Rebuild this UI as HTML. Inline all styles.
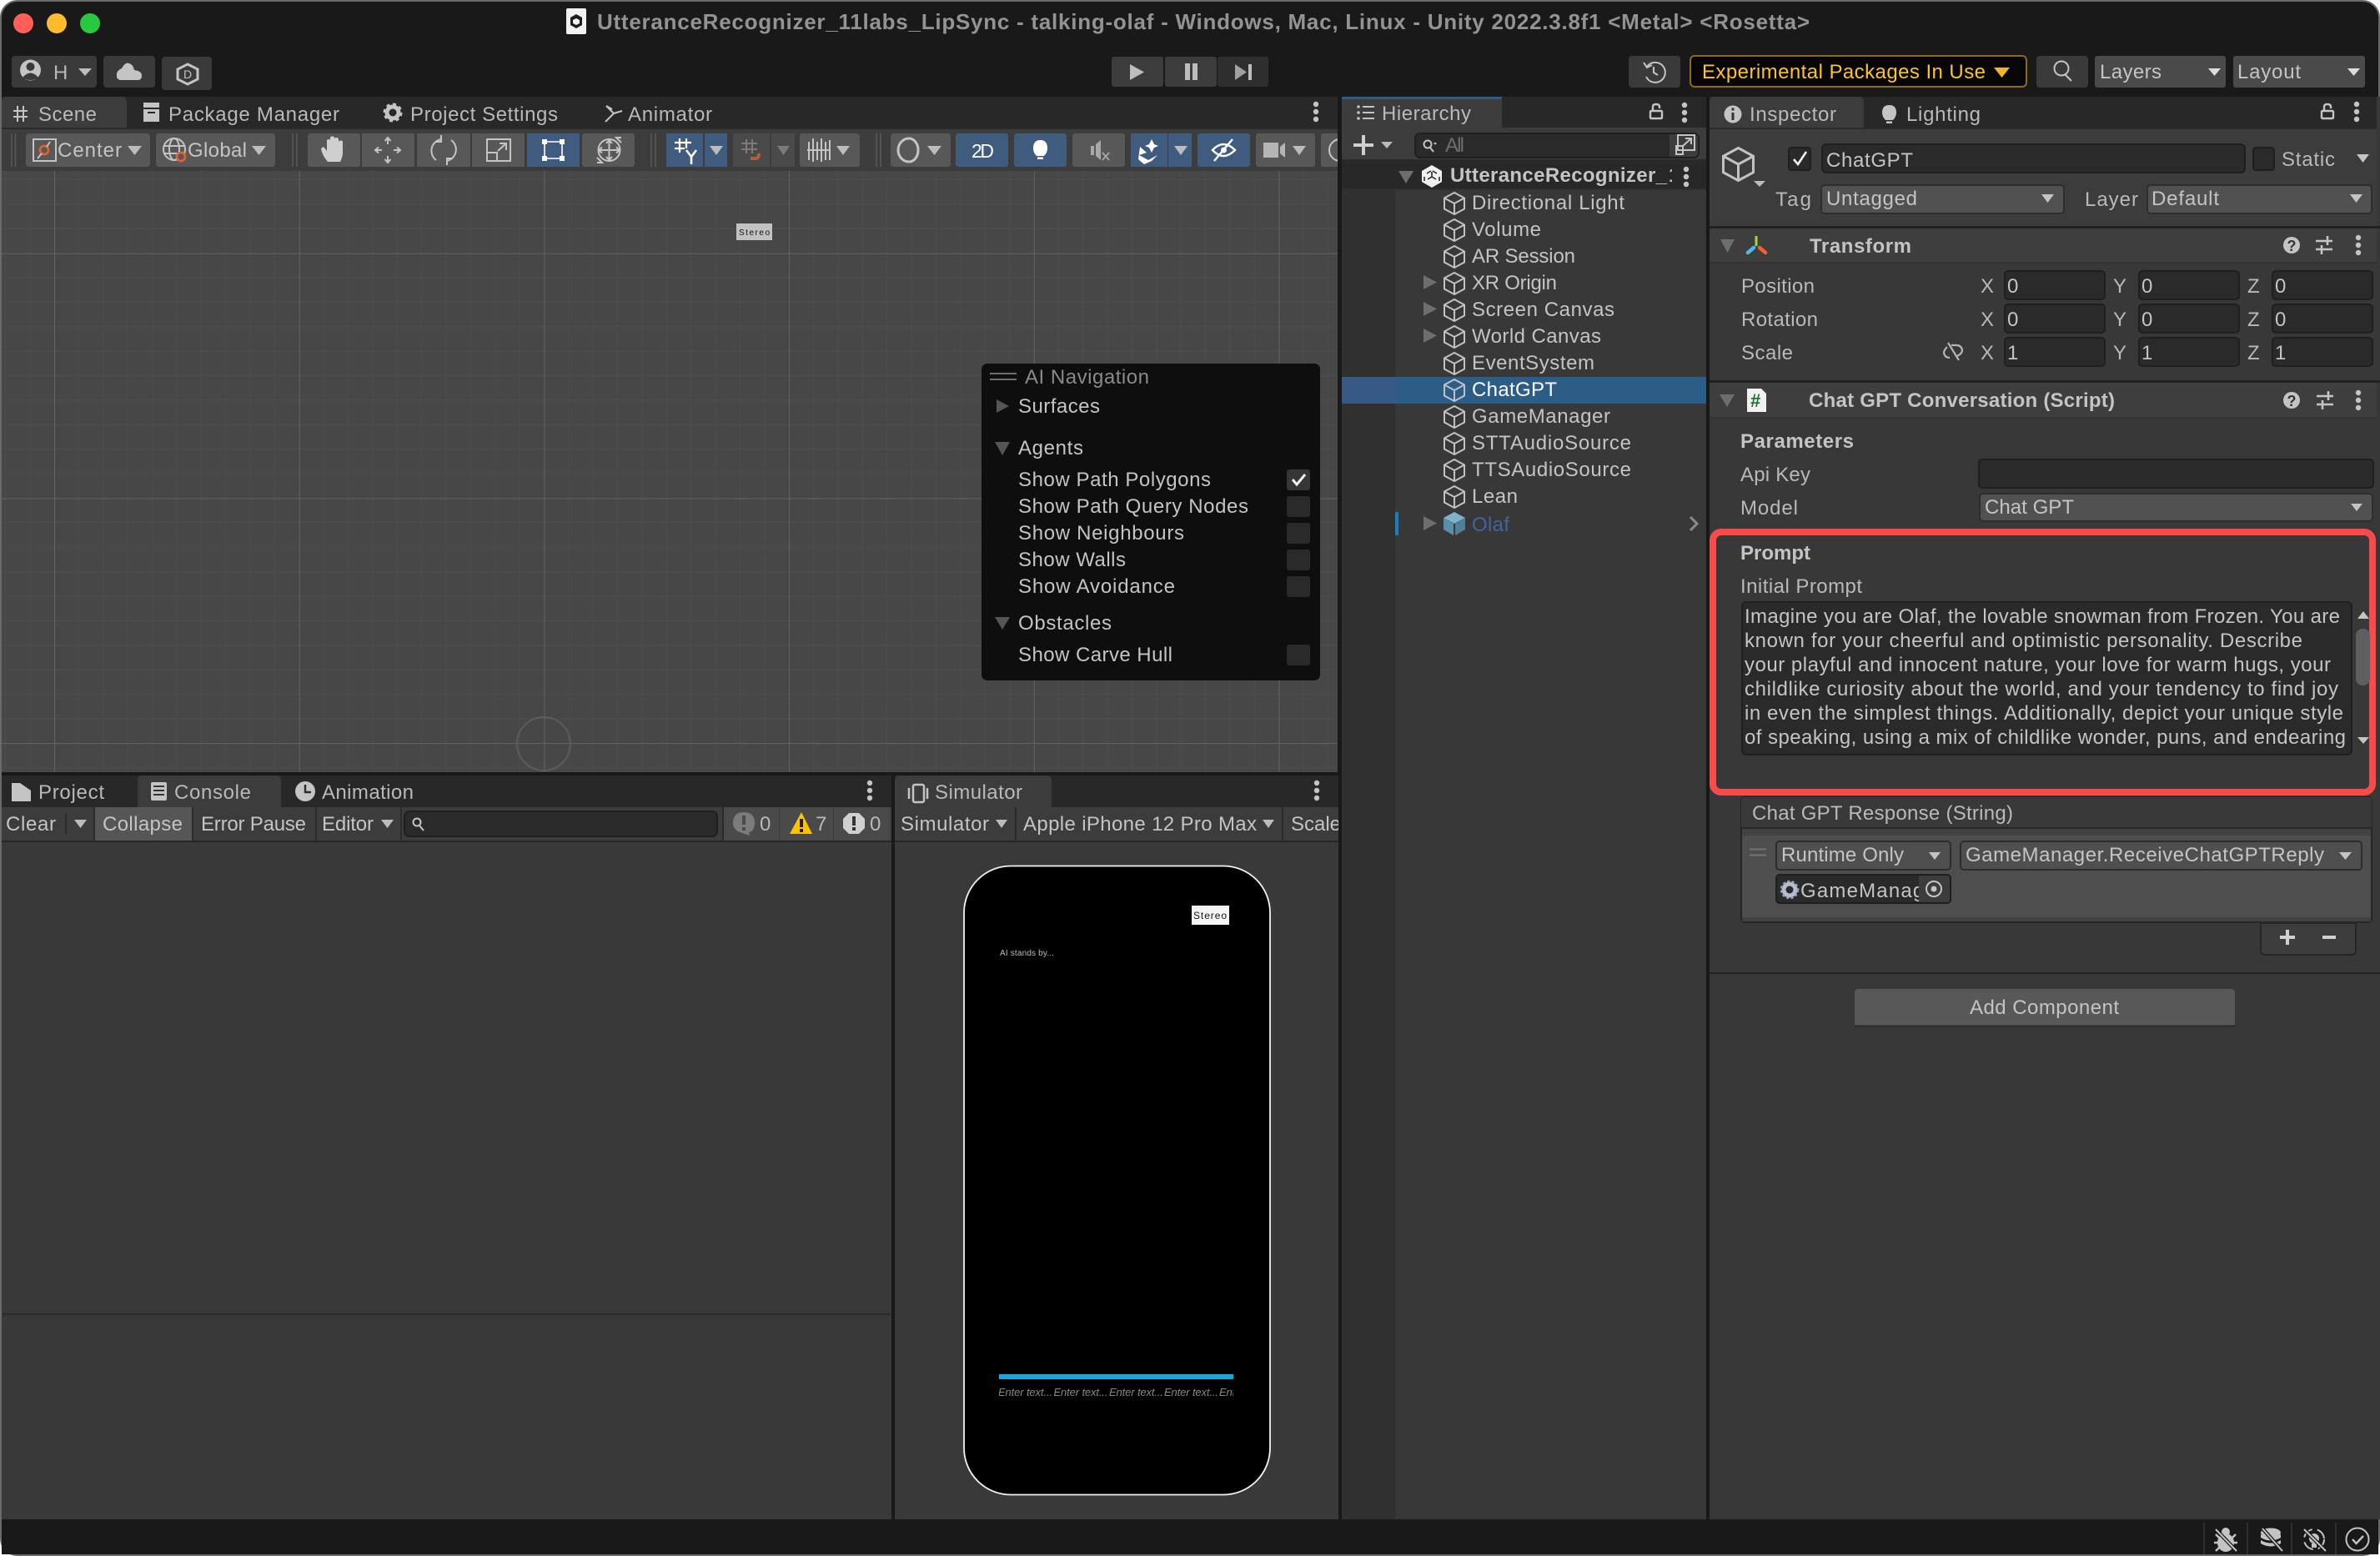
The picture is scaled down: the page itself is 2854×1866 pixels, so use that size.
<!DOCTYPE html>
<html><head><meta charset="utf-8"><title>Unity Editor</title>
<style>
html,body{margin:0;padding:0;background:#fff;width:2854px;height:1866px;overflow:hidden}
svg{display:block}
text{font-family:"Liberation Sans",sans-serif;font-size:24px;fill:#c4c4c4;white-space:pre;transform:translate(-1px,0)}
.b{font-weight:bold}
.t{font-weight:bold;fill:#939393;font-size:26px}
.d{fill:#8a8a8a}
.s{fill:#b9b9b9}
.i{stroke:#c4c4c4;stroke-width:2;fill:none}
.f{fill:#c4c4c4}
.a{fill:#bcbcbc}
.fd{fill:#2a2a2a;stroke:#1f1f1f;stroke-width:2}
.dd{fill:#515151;stroke:#2d2d2d;stroke-width:2}
.btn{fill:#585858}
.bl{fill:#3f5c7e}
.mid{fill:#3c3c3c}
.r text,text.r{transform:translate(-1px,-1px)}
</style></head><body>
<svg xmlns="http://www.w3.org/2000/svg" width="2854" height="1866" viewBox="0 0 2854 1866">
<defs>
<pattern id="grid" patternUnits="userSpaceOnUse" x="65" y="10" width="293.7" height="293.7">
<path d="M29.37 0V293.7M58.74 0V293.7M88.11 0V293.7M117.48 0V293.7M146.85 0V293.7M176.22 0V293.7M205.59 0V293.7M234.96 0V293.7M264.33 0V293.7M0 29.37H293.7M0 58.74H293.7M0 88.11H293.7M0 117.48H293.7M0 146.85H293.7M0 176.22H293.7M0 205.59H293.7M0 234.96H293.7M0 264.33H293.7" stroke="#4d4d4d" stroke-width="1" fill="none"/>
<path d="M.5 0V293.7M0 .5H293.7" stroke="#636363" stroke-width="1" fill="none"/>
</pattern>
<g id="cube" fill="none" stroke="#c2c2c2" stroke-width="2"><path d="M13 1 25 7.5V20.5L13 27 1 20.5V7.5Z"/><path d="M1 7.5 13 14 25 7.5M13 14V27"/></g>
<g id="dots" fill="#c4c4c4"><circle cx="0" cy="-9" r="3.2"/><circle cx="0" cy="0" r="3.2"/><circle cx="0" cy="9" r="3.2"/></g>
<g id="arrowR" fill="#6e6e6e"><path d="M0 0V17L16 8.5Z"/></g>
<g id="lock" fill="none" stroke="#c4c4c4" stroke-width="2.4"><rect x="1" y="9" width="14" height="9" rx="1"/><path d="M4 9V4Q4 1 8 1T12 4V6"/></g>
<g id="help"><circle cx="0" cy="0" r="10" fill="#c4c4c4"/><text x="-4.5" y="7" class="b" style="font-size:18px;fill:#333">?</text></g>
<g id="sl" fill="none" stroke="#c4c4c4" stroke-width="2.6"><path d="M-10-5H10M-10 5H10M4-11V0M-3 0V11"/></g>
<clipPath id="cTA"><rect x="2090" y="723" width="728" height="180"/></clipPath>
<clipPath id="cSc"><rect x="1073" y="970" width="532" height="40"/></clipPath>
<clipPath id="cU"><rect x="1995" y="195" width="10" height="30"/></clipPath>
<clipPath id="cG"><rect x="2156" y="1050" width="145" height="32"/></clipPath>
<clipPath id="cE"><rect x="1198" y="1655" width="281" height="30"/></clipPath>
<clipPath id="cTb"><rect x="1575" y="155" width="29" height="50"/></clipPath>
</defs>

<!-- window -->
<rect x="1" y="1" width="2852" height="1864" rx="20" fill="#191919" stroke="#6a6a6a" stroke-width="2"/>
<circle cx="28" cy="28" r="12" fill="#ff5f57"/><circle cx="68" cy="28" r="12" fill="#febc2e"/><circle cx="108" cy="28" r="12" fill="#28c840"/>
<rect x="679" y="10" width="24" height="31" rx="2" fill="#f2f2f2"/><path d="M691 17 698 21V30L691 34 684 30V21Z" fill="#1c1c1c"/><path d="M691 22 695 24V28L691 30 687 28V24Z" fill="#f2f2f2"/>
<text class="t" x="717" y="35" textLength="1454">UtteranceRecognizer_11labs_LipSync - talking-olaf - Windows, Mac, Linux - Unity 2022.3.8f1 &lt;Metal&gt; &lt;Rosetta&gt;</text>

<!-- top toolbar -->
<rect x="14" y="67" width="102" height="38" rx="4" fill="#3a3a3a"/>
<circle cx="36.5" cy="84" r="12.5" fill="#c4c4c4"/><circle cx="36.5" cy="80" r="5" fill="#3a3a3a"/><path d="M27 93Q36.5 82 46 93Q36.5 99 27 93Z" fill="#3a3a3a"/>
<text x="65" y="95" textLength="16" class="s">H</text><path d="M94 82H110L102 91Z" class="a"/>
<rect x="124" y="67" width="62" height="38" rx="4" fill="#3a3a3a"/><path d="M145 96Q139 96 140 88Q141 84 146 82Q150 74 155 76Q160 78 161 84Q170 85 170 91Q170 96 165 96Z" fill="#c4c4c4"/>
<rect x="194" y="68" width="60" height="40" rx="4" fill="#3a3a3a"/>
<path d="M225 77 237 83V95L225 101 213 95V83Z" fill="none" stroke="#c4c4c4" stroke-width="3"/><text x="221" y="94" style="font-size:14px">D</text>

<rect x="1333" y="68" width="62" height="36" rx="3" fill="#3c3c3c"/><rect x="1397" y="68" width="62" height="36" rx="3" fill="#3c3c3c"/><rect x="1460" y="68" width="61" height="36" rx="3" fill="#2e2e2e"/>
<path d="M1355 77V96L1372 86.5Z" fill="#bdbdbd"/><path d="M1421 76h6v20h-6zM1430 76h6v20h-6z" fill="#bdbdbd"/><path d="M1481 77V96L1495 86.5Z" fill="#a0a0a0"/><rect x="1497" y="77" width="4" height="19" fill="#bdbdbd"/>

<rect x="1953" y="67" width="62" height="38" rx="4" fill="#3a3a3a"/>
<path d="M1975 80A12 12 0 1 1 1974 92" class="i"/><path d="M1971 75 1975 81 1981 78M1983 80V87L1988 90" class="i"/>
<rect x="2027" y="67" width="403" height="37" rx="5" fill="#060606" stroke="#8f6b12" stroke-width="2"/>
<text x="2042" y="94" textLength="340" style="fill:#fdc22e">Experimental Packages In Use</text><path d="M2391 81H2410L2400.5 93Z" fill="#f2b52a"/>
<rect x="2442" y="67" width="62" height="38" rx="4" fill="#3a3a3a"/><circle cx="2472" cy="82" r="8.5" class="i"/><path d="M2477 90 2484 97" class="i" stroke-width="3"/>
<rect x="2512" y="67" width="157" height="38" rx="3" fill="#4a4a4a"/><text x="2519" y="94" textLength="74">Layers</text><path d="M2648 82H2663L2655.5 91Z" fill="#ddd"/>
<rect x="2678" y="67" width="158" height="38" rx="3" fill="#4a4a4a"/><text x="2684" y="94" textLength="76">Layout</text><path d="M2815 82H2830L2822.5 91Z" fill="#ddd"/>

<!-- Scene panel -->
<rect x="2" y="116" width="1602" height="37" fill="#282828"/>
<path d="M2 153V122Q2 116 8 116H146Q152 116 152 122V153Z" fill="#3c3c3c"/>
<path d="M21 127V146M28 127V146M16 133H33M16 140H33" class="i"/>
<text x="47" y="145" textLength="70" class="s">Scene</text>
<path d="M172 123h19v6h-19zM172 131h19v15h-19z" fill="#c4c4c4"/><rect x="177" y="134" width="9" height="2" fill="#282828"/>
<text x="203" y="145" textLength="205" class="s">Package Manager</text>
<circle cx="471" cy="135" r="7" fill="none" stroke="#c4c4c4" stroke-width="5"/><circle cx="471" cy="135" r="10" fill="none" stroke="#c4c4c4" stroke-width="3" stroke-dasharray="4 3.8"/>
<text x="493" y="145" textLength="177" class="s">Project Settings</text>
<path d="M727 127 736 136 726 146M736 136 746 133M727 127l7 4" class="i" stroke-width="2.6"/>
<text x="754" y="145" textLength="101" class="s">Animator</text>
<use href="#dots" x="1578" y="134"/>

<rect x="2" y="153" width="1602" height="52" fill="#3c3c3c"/>
<rect x="2" y="153" width="1602" height="2" fill="#2b2b2b"/>
<path d="M14 160V200M18.500 160V200M351 160V200M356 160V200M781 160V200M786 160V200M1051 160V200M1056 160V200" stroke="#585858" stroke-width="1.600"/>
<rect x="31" y="160" width="149" height="40" rx="4" class="btn"/>
<rect x="40" y="167" width="27" height="26" fill="none" stroke="#c4c4c4" stroke-width="2"/><circle cx="53" cy="180" r="5" fill="none" stroke="#e8622c" stroke-width="2.600"/><path d="M60 170 56 176M50 184 45 190" class="i"/>
<text x="70" y="188" textLength="77">Center</text><path d="M153 175H170L161.500 186Z" class="a"/>
<rect x="187" y="160" width="143" height="40" rx="4" class="btn"/>
<circle cx="209" cy="179" r="13" class="i"/><ellipse cx="209" cy="179" rx="6" ry="13" class="i"/><path d="M196 175H222M196 184H222" class="i"/><circle cx="217" cy="188" r="5" fill="#585858" stroke="#e8622c" stroke-width="2.600"/>
<text x="226" y="188" textLength="71">Global</text><path d="M302 175H319L310.500 186Z" class="a"/>

<rect x="369" y="160" width="63" height="40" rx="3" class="btn"/><rect x="434" y="160" width="63" height="40" class="btn"/><rect x="500" y="160" width="64" height="40" class="btn"/><rect x="566" y="160" width="63" height="40" class="btn"/><rect x="632" y="160" width="63" height="40" class="bl"/><rect x="698" y="160" width="63" height="40" rx="3" class="btn"/>
<path d="M393 194Q386 186 385 178L388 176 392 181V169Q392 167 394 167 396 167 396 169V165.500Q396 163.500 398.500 163.500 401 163.500 401 165.500V166.500Q401 165 403.500 165 406 165 406 167.500V170.500Q406 168.500 408.500 168.500 411 168.500 411 170.500V183Q411 188 408 194Z" fill="#cfcfcf"/>
<path d="M465 165V173M465 187V195M450 180H458M472 180H480M461.500 169 465 165 468.500 169M461.500 191 465 195 468.500 191M454 176.500 450 180 454 183.500M476 176.500 480 180 476 183.500" class="i"/>
<path d="M529 167A14 14 0 0 0 523 192M536 193A14 14 0 0 0 541 168M529 162V170H522M536 198V190H543" class="i"/>
<path d="M584 167H612V193H584ZM584 183H596V193M597 181 607 172M599 172H607V180" class="i"/>
<path d="M654 170H673M654 190H673M653 173V187M674 173V187" stroke="#fff" stroke-width="1.600"/><path d="M650 167h6v6h-6zM671 167h6v6h-6zM650 187h6v6h-6zM671 187h6v6h-6z" fill="#fff"/>
<circle cx="730.500" cy="180" r="13" class="i"/><path d="M730.500 168V192M718 180H743M727 172 730.500 168 734 172M727 188 730.500 192 734 188M722 176.500 718 180 722 183.500M739 176.500 743 180 739 183.500M716 195 722 195 716 189M745 165 739 165 745 171" class="i"/>

<rect x="799" y="160" width="44" height="40" class="bl"/><rect x="845" y="160" width="27" height="40" class="bl"/>
<path d="M815 166V183M823 166V178M809 171H829M809 178H821" stroke="#fff" stroke-width="2.200"/><path d="M823 180 829 188 835 180M829 188V197" stroke="#fff" stroke-width="2.600" fill="none"/><path d="M851 175H867L859 186Z" class="a"/>
<rect x="879" y="160" width="44" height="40" fill="#4a4a4a"/><rect x="925" y="160" width="28" height="40" fill="#4a4a4a"/>
<path d="M895 167V184M902 167V184M889 172H908M889 179H908" stroke="#7b7b7b" stroke-width="2"/><path d="M900 190H906Q910 190 910 184" stroke="#b85b3a" stroke-width="4" fill="none"/><path d="M932 175H947L939.500 186Z" fill="#7b7b7b"/>
<rect x="959" y="160" width="72" height="40" rx="3" class="btn"/>
<path d="M968 180H995M970 170V192M975 166V194M980 170V192M985 166V194M990 170V192M995 168V192" class="i" stroke-width="1.500"/><path d="M1003 175H1019L1011 186Z" class="a"/>
<rect x="1068" y="160" width="72" height="40" rx="3" class="btn"/>
<path d="M1090 166A13 14 0 1 0 1090 194A11 14 0 0 0 1090 166Z" fill="none" stroke="#c4c4c4" stroke-width="3"/><path d="M1112 175H1129L1120.500 186Z" class="a"/>
<rect x="1146" y="160" width="63" height="40" rx="3" class="bl"/><text x="1166" y="189" textLength="27" style="fill:#fff;font-size:23px">2D</text>
<rect x="1216" y="160" width="63" height="40" rx="3" class="bl"/><path d="M1247.500 168Q1256 168 1256 178 1256 183 1252 187H1243Q1239 183 1239 178 1239 168 1247.500 168ZM1244 188.500H1251V191H1244Z" fill="#fff"/>
<rect x="1286" y="160" width="63" height="40" rx="3" class="btn"/><path d="M1308 175h4v11h-4zM1314 173 1320 168V192L1314 187Z" fill="#a8a8a8"/><path d="M1322 183 1330 192M1330 183 1322 192" stroke="#a8a8a8" stroke-width="1.800"/>
<rect x="1356" y="160" width="44" height="40" class="bl"/><rect x="1401" y="160" width="28" height="40" class="bl"/>
<path d="M1381 167 1384 173 1389 175 1384 177 1381 183 1378 177 1373 175 1378 173ZM1367 176 1375 183 1366 186 1377 192 1388 186 1381 193 1372 197 1365 191Z" fill="#fff"/><path d="M1408 175H1424L1416 186Z" class="a"/>
<rect x="1436" y="160" width="63" height="40" rx="3" class="bl"/><path d="M1454 180Q1467 166 1481 180Q1467 194 1454 180Z" fill="none" stroke="#fff" stroke-width="2.400"/><circle cx="1467.500" cy="180" r="3.500" fill="#fff"/><path d="M1456 193 1478 167" stroke="#fff" stroke-width="2.400"/>
<rect x="1506" y="160" width="71" height="40" rx="3" class="btn"/><path d="M1515 171h18v18h-18zM1535 176 1541 171V189L1535 184Z" fill="#b5b5b5"/><path d="M1550 175H1566L1558 186Z" class="a"/>
<g clip-path="url(#cTb)"><rect x="1584" y="160" width="40" height="40" rx="3" class="btn"/><circle cx="1607" cy="180" r="13" class="i"/></g>

<!-- scene view -->
<rect x="2" y="205" width="1602" height="721" fill="#474747"/>
<rect x="2" y="205" width="1602" height="721" fill="url(#grid)"/>
<circle cx="652" cy="892" r="32" fill="none" stroke="#5c5c5c" stroke-width="2"/>
<rect x="883" y="268" width="43" height="20" fill="#c2c2c2"/><text x="887" y="282" textLength="37" style="font-size:10px;fill:#111">Stereo</text>

<!-- AI nav -->
<rect x="1177" y="436" width="406" height="380" rx="7" fill="#0b0b0b" fill-opacity=".96"/>
<path d="M1187 448H1219M1187 455H1219" stroke="#7c7c7c" stroke-width="1.800"/>
<text x="1230" y="460" textLength="149" class="d">AI Navigation</text>
<path d="M1195 479V495L1210 487Z" fill="#555"/><text x="1222" y="495" textLength="98">Surfaces</text>
<path d="M1193 530H1211L1202 546Z" fill="#555"/><text x="1222" y="545" textLength="78">Agents</text>
<text x="1222" y="583" textLength="231">Show Path Polygons</text>
<text x="1222" y="615" textLength="276">Show Path Query Nodes</text>
<text x="1222" y="647" textLength="199">Show Neighbours</text>
<text x="1222" y="679" textLength="129">Show Walls</text>
<text x="1222" y="711" textLength="188">Show Avoidance</text>
<path d="M1193 740H1211L1202 755Z" fill="#555"/><text x="1222" y="755" textLength="112">Obstacles</text>
<text x="1222" y="793" textLength="185">Show Carve Hull</text>
<rect x="1543" y="563" width="28" height="25" rx="3" fill="#363636"/><path d="M1550 575 1555 581 1565 569" stroke="#f0f0f0" stroke-width="3" fill="none"/>
<rect x="1543" y="595" width="28" height="25" rx="3" fill="#2a2a2a"/><rect x="1543" y="627" width="28" height="25" rx="3" fill="#2a2a2a"/><rect x="1543" y="659" width="28" height="25" rx="3" fill="#2a2a2a"/><rect x="1543" y="691" width="28" height="25" rx="3" fill="#2a2a2a"/><rect x="1543" y="773" width="28" height="25" rx="3" fill="#2a2a2a"/>

<!-- Console panel -->
<rect x="2" y="930" width="1067" height="892" fill="#393939"/>
<rect x="2" y="930" width="1067" height="38" fill="#282828"/>
<path d="M165 968V936Q165 930 171 930H331Q337 930 337 936V968Z" fill="#3c3c3c"/>
<path d="M14 939H24L37 948V961H14Z" fill="#c4c4c4"/>
<text x="47" y="958" textLength="79" class="s">Project</text>
<rect x="181" y="938" width="19" height="22" rx="2" fill="#c4c4c4"/><path d="M184 943H197M184 948H197M184 953H197" stroke="#333" stroke-width="2"/>
<text x="210" y="958" textLength="92" class="s">Console</text>
<circle cx="366" cy="949" r="12" fill="#c4c4c4"/><path d="M366 941V950H373" stroke="#2a2a2a" stroke-width="2.400" fill="none"/>
<text x="387" y="958" textLength="110" class="s">Animation</text>
<use href="#dots" x="1043" y="948"/>
<rect x="2" y="968" width="1067" height="40" fill="#3c3c3c"/><rect x="2" y="1008" width="1067" height="2" fill="#262626"/>
<text x="8" y="996" textLength="60">Clear</text><rect x="78" y="976" width="2" height="24" fill="#2b2b2b"/><path d="M89 983H104L96.500 993Z" class="a"/>
<rect x="114" y="968" width="116" height="40" fill="#565656"/><text x="124" y="996" textLength="96">Collapse</text>
<path d="M113 968V1008M231 968V1008M379 968V1008M481 968V1008M867 968V1008" stroke="#2b2b2b" stroke-width="2"/>
<text x="242" y="996" textLength="126">Error Pause</text>
<text x="387" y="996" textLength="62">Editor</text><path d="M457 983H472L464.500 993Z" class="a"/>
<rect x="485" y="973" width="375" height="30" rx="6" class="fd"/><circle cx="500" cy="986" r="4.500" fill="none" stroke="#c4c4c4" stroke-width="2"/><path d="M503 990 508 996" stroke="#c4c4c4" stroke-width="2"/>
<rect x="868" y="968" width="66" height="40" fill="#4a4a4a"/><rect x="935" y="968" width="64" height="40" fill="#4a4a4a"/><rect x="1000" y="968" width="67" height="40" fill="#4a4a4a"/>
<path d="M892 974Q905 974 905 987 905 997 898 998L899 1002 890 999Q879 996 879 987 879 974 892 974Z" fill="#7b7b7b"/><path d="M890 978h4v11h-4zM890 992h4v4h-4z" fill="#4a4a4a"/>
<text x="912" y="996" textLength="13" class="s">0</text>
<path d="M961 974 974 1000H947Z" fill="#fec106"/><path d="M959 982h4v10h-4zM959 994h4v4h-4z" fill="#1e1e1e"/>
<text x="979" y="996" textLength="13" class="s">7</text>
<path d="M1018 975H1030L1037 982V993L1030 1000H1018L1011 993V982Z" fill="#d0d0d0"/><path d="M1022 979h4v11h-4zM1022 992h4v4h-4z" fill="#333"/>
<text x="1044" y="996" textLength="13" class="s">0</text>
<rect x="2" y="1575" width="1067" height="2" fill="#2c2c2c"/>

<!-- Simulator panel -->
<rect x="1073" y="930" width="532" height="892" fill="#393939"/>
<rect x="1073" y="930" width="532" height="38" fill="#282828"/>
<path d="M1073 968V936Q1073 930 1079 930H1255Q1261 930 1261 936V968Z" fill="#3c3c3c"/>
<rect x="1095" y="941" width="13" height="21" rx="2" fill="none" stroke="#c4c4c4" stroke-width="2.500"/><path d="M1090 945V958M1112 945V958" stroke="#c4c4c4" stroke-width="2.500"/>
<text x="1122" y="958" textLength="105" class="s">Simulator</text>
<use href="#dots" x="1579" y="948"/>
<rect x="1073" y="968" width="532" height="40" fill="#3c3c3c"/><rect x="1073" y="1008" width="532" height="2" fill="#262626"/>
<text x="1081" y="996" textLength="106">Simulator</text><path d="M1194 983H1208L1201 993Z" class="a"/>
<rect x="1217" y="968" width="2" height="40" fill="#2b2b2b"/>
<text x="1228" y="996" textLength="280">Apple iPhone 12 Pro Max</text><path d="M1514 983H1528L1521 993Z" class="a"/>
<rect x="1537" y="968" width="2" height="40" fill="#2b2b2b"/>
<g clip-path="url(#cSc)"><text x="1549" y="996" textLength="60">Scale</text></g>
<rect x="1156" y="1038.500" width="367" height="754" rx="56" fill="#000" stroke="#f2f2f2" stroke-width="1.800"/>
<rect x="1429" y="1086" width="45" height="23" fill="#f4f4f4"/><text x="1432" y="1102" textLength="40" style="font-size:12px;fill:#111">Stereo</text>
<text x="1200" y="1146" textLength="65" style="font-size:10px;fill:#bcbcbc">AI stands by...</text>
<rect x="1198" y="1648" width="281" height="6" fill="#1aa7d9"/>
<g clip-path="url(#cE)"><text x="1198" y="1674" textLength="65" style="font-size:13px;fill:#888;font-style:italic">Enter text...</text><text x="1264.500" y="1674" textLength="65" style="font-size:13px;fill:#888;font-style:italic">Enter text...</text><text x="1331" y="1674" textLength="65" style="font-size:13px;fill:#888;font-style:italic">Enter text...</text><text x="1397" y="1674" textLength="65" style="font-size:13px;fill:#888;font-style:italic">Enter text...</text><text x="1463" y="1674" textLength="65" style="font-size:13px;fill:#888;font-style:italic">Enter text...</text></g>

<!-- Hierarchy -->
<rect x="1609" y="116" width="437" height="1706" fill="#383838"/>
<rect x="1609" y="116" width="437" height="37" fill="#282828"/>
<path d="M1609 153V121Q1609 116 1614 116H1796Q1801 116 1801 121V153Z" fill="#3c3c3c"/>
<rect x="1609" y="116" width="192" height="3" fill="#2c5d87"/>
<path d="M1634 128H1648M1634 135H1648M1634 142H1648" stroke="#c4c4c4" stroke-width="2"/><circle cx="1629" cy="128" r="1.800" class="f"/><circle cx="1629" cy="135" r="1.800" class="f"/><circle cx="1629" cy="142" r="1.800" class="f"/>
<text x="1658" y="144" textLength="107" class="s">Hierarchy</text>
<use href="#lock" x="1978" y="124"/><use href="#dots" x="2020" y="135"/>
<rect x="1609" y="153" width="437" height="40" fill="#3c3c3c"/><rect x="1609" y="191" width="437" height="2" fill="#2b2b2b"/>
<path d="M1635 162V186M1623 174H1647" stroke="#d0d0d0" stroke-width="4"/><path d="M1656 170H1670L1663 178Z" fill="#bbb"/>
<rect x="1697" y="160" width="340" height="29" rx="6" class="fd"/>
<path d="M2002 161H2031Q2036 161 2036 166V183Q2036 188 2031 188H2002Z" fill="#3d3d3d"/>
<circle cx="1712" cy="173" r="4.500" fill="none" stroke="#c4c4c4" stroke-width="2"/><path d="M1715 177 1719 182" stroke="#c4c4c4" stroke-width="2"/><path d="M1719 171H1723L1721 174Z" class="f"/>
<text x="1734" y="182" textLength="23" style="fill:#6d6d6d">All</text>
<path d="M2012 162H2032V180H2012ZM2010 175H2018V185H2010ZM2017 176 2028 166M2021 166H2028V173" fill="none" stroke="#c4c4c4" stroke-width="2"/>
<rect x="1609" y="193" width="437" height="33" fill="#282828"/><rect x="1609" y="226" width="437" height="2" fill="#2f2f2f"/>
<path d="M1677 205H1695L1686 220Z" fill="#6e6e6e"/>
<path d="M1717 198 1729 205V218L1717 225 1705 218V205Z" fill="#f0f0f0"/><path d="M1717 206V212L1712 215M1717 212 1722 215M1711 208 1716 205M1723 208 1718 205M1708 212V217M1726 212V217" stroke="#282828" stroke-width="1.600" fill="none"/>
<text x="1740" y="218" class="b" textLength="260">UtteranceRecognizer_</text>
<g clip-path="url(#cU)"><text x="2002" y="218" class="b">1</text></g>
<use href="#dots" x="2022" y="212"/>
<rect x="1609" y="228" width="64" height="1594" fill="#303030"/>
<rect x="1609" y="452" width="64" height="32" fill="#375a84"/><rect x="1673" y="452" width="373" height="32" fill="#2c5d87"/>
<g class="r">
<use href="#cube" x="1731" y="230"/><text x="1766" y="252" textLength="183">Directional Light</text>
<use href="#cube" x="1731" y="262"/><text x="1766" y="284" textLength="83">Volume</text>
<use href="#cube" x="1731" y="294"/><text x="1766" y="316" textLength="124">AR Session</text>
<use href="#arrowR" x="1707" y="330"/><use href="#cube" x="1731" y="326"/><text x="1766" y="348" textLength="102">XR Origin</text>
<use href="#arrowR" x="1707" y="362"/><use href="#cube" x="1731" y="358"/><text x="1766" y="380" textLength="171">Screen Canvas</text>
<use href="#arrowR" x="1707" y="394"/><use href="#cube" x="1731" y="390"/><text x="1766" y="412" textLength="155">World Canvas</text>
<use href="#cube" x="1731" y="422"/><text x="1766" y="444" textLength="147">EventSystem</text>
<use href="#cube" x="1731" y="454"/><text x="1766" y="476" textLength="102" style="fill:#fff">ChatGPT</text>
<use href="#cube" x="1731" y="486"/><text x="1766" y="508" textLength="166">GameManager</text>
<use href="#cube" x="1731" y="518"/><text x="1766" y="540" textLength="191">STTAudioSource</text>
<use href="#cube" x="1731" y="550"/><text x="1766" y="572" textLength="191">TTSAudioSource</text>
<use href="#cube" x="1731" y="582"/><text x="1766" y="604" textLength="55">Lean</text>
</g>
<rect x="1673" y="614" width="4" height="28" fill="#0f80c0"/>
<use href="#arrowR" x="1707" y="619"/>
<path d="M1744 614 1757 621 1744 628 1731 621Z" fill="#7fb2cc"/><path d="M1731 621 1743 628V642L1731 635Z" fill="#5a8eab"/><path d="M1757 621 1745 628V642L1757 635Z" fill="#4f7f9c"/>
<text x="1766" y="637" textLength="45" style="fill:#3f659e">Olaf</text>
<path d="M2027 620 2035 628 2027 636" stroke="#8a8a8a" stroke-width="3" fill="none"/>

<!-- Inspector -->
<rect x="2050" y="116" width="804" height="1706" fill="#383838"/>
<rect x="2050" y="116" width="800" height="37" fill="#282828"/>
<path d="M2050 153V122Q2050 116 2056 116H2229Q2235 116 2235 122V153Z" fill="#3c3c3c"/>
<circle cx="2078" cy="137" r="10.500" fill="#c4c4c4"/><path d="M2076.500 135h3v9h-3zM2076.500 129.500h3v3h-3z" fill="#333"/>
<text x="2099" y="145" textLength="104" class="s">Inspector</text>
<path d="M2265.500 126Q2274 126 2274 135 2274 140 2270 144H2261Q2257 140 2257 135 2257 126 2265.500 126ZM2262 145.500H2269V148H2262Z" fill="#c4c4c4"/>
<text x="2287" y="145" textLength="89" class="s">Lighting</text>
<use href="#lock" x="2783" y="124"/><use href="#dots" x="2826" y="134"/>
<rect x="2050" y="153" width="800" height="118" fill="#3c3c3c"/>
<rect x="2050" y="153" width="800" height="2" fill="#2b2b2b"/>
<g transform="translate(2065 176) scale(1.500)"><use href="#cube"/></g>
<path d="M2103 217H2117L2110 224Z" class="a"/>
<rect x="2145" y="177" width="26" height="27" rx="3" class="fd"/><path d="M2151 191 2156 197 2166 182" stroke="#f0f0f0" stroke-width="2.600" fill="none"/>
<rect x="2185" y="173" width="507" height="34" rx="5" class="fd"/>
<text x="2191" y="200" textLength="104">ChatGPT</text>
<rect x="2702" y="177" width="25" height="27" rx="3" class="fd"/>
<text x="2737" y="199" textLength="64" class="s">Static</text><path d="M2826 185H2841L2833.500 195Z" class="f"/>
<text x="2130" y="247" textLength="43" class="s">Tag</text>
<rect x="2184" y="222" width="291" height="34" rx="4" class="dd"/><text x="2191" y="246" textLength="109">Untagged</text><path d="M2448 233H2463L2455.500 243Z" class="f"/>
<text x="2501" y="247" textLength="64" class="s">Layer</text>
<rect x="2575" y="222" width="269" height="34" rx="4" class="dd"/><text x="2581" y="246" textLength="81">Default</text><path d="M2818 233H2833L2825.500 243Z" class="f"/>

<rect x="2050" y="271" width="804" height="3" fill="#212121"/>
<rect x="2050" y="274" width="800" height="40" fill="#3e3e3e"/><rect x="2050" y="314" width="800" height="2" fill="#333"/>
<path d="M2063 287H2080L2071.500 303Z" fill="#6e6e6e"/>
<path d="M2104.500 283h3v12h-3z" fill="#a0d83a"/><path d="M2096 303 2103 297" stroke="#4bb7f0" stroke-width="4.500" stroke-linecap="round"/><path d="M2110 297 2117 303" stroke="#f0612f" stroke-width="4.500" stroke-linecap="round"/>
<text x="2171" y="303" class="b" textLength="122">Transform</text>
<use href="#help" x="2748" y="294"/><use href="#sl" x="2787" y="294"/><use href="#dots" x="2828" y="294"/>
<text x="2089" y="351" textLength="88" class="s">Position</text>
<text x="2089" y="391" textLength="92" class="s">Rotation</text>
<text x="2089" y="431" textLength="62" class="s">Scale</text>
<path d="M2335 416Q2331 420 2331 423 2332 429 2338 429M2347 427Q2353 424 2353 420 2352 414 2346 414H2340M2336 411 2349 432" fill="none" stroke="#b5b5b5" stroke-width="2.200"/>
<text x="2376" y="351" textLength="13" class="s">X</text><text x="2535" y="351" textLength="14" class="s">Y</text><text x="2696" y="351" textLength="13" class="s">Z</text>
<text x="2376" y="391" textLength="13" class="s">X</text><text x="2535" y="391" textLength="14" class="s">Y</text><text x="2696" y="391" textLength="13" class="s">Z</text>
<text x="2376" y="431" textLength="13" class="s">X</text><text x="2535" y="431" textLength="14" class="s">Y</text><text x="2696" y="431" textLength="13" class="s">Z</text>
<rect x="2404" y="325" width="120" height="34" rx="4" class="fd"/><rect x="2565" y="325" width="120" height="34" rx="4" class="fd"/><rect x="2725" y="325" width="120" height="34" rx="4" class="fd"/>
<rect x="2404" y="365" width="120" height="34" rx="4" class="fd"/><rect x="2565" y="365" width="120" height="34" rx="4" class="fd"/><rect x="2725" y="365" width="120" height="34" rx="4" class="fd"/>
<rect x="2404" y="405" width="120" height="34" rx="4" class="fd"/><rect x="2565" y="405" width="120" height="34" rx="4" class="fd"/><rect x="2725" y="405" width="120" height="34" rx="4" class="fd"/>
<text x="2408" y="351">0</text><text x="2569" y="351">0</text><text x="2729" y="351">0</text>
<text x="2408" y="391">0</text><text x="2569" y="391">0</text><text x="2729" y="391">0</text>
<text x="2408" y="431">1</text><text x="2569" y="431">1</text><text x="2729" y="431">1</text>

<rect x="2050" y="456" width="804" height="3" fill="#212121"/>
<rect x="2050" y="459" width="800" height="41" fill="#3e3e3e"/><rect x="2050" y="500" width="800" height="2" fill="#333"/>
<path d="M2062 473H2080L2071 488Z" fill="#6e6e6e"/>
<path d="M2095 466H2112L2118 472V494H2095Z" fill="#f2f2f2"/><text x="2100" y="488" class="b" style="font-size:22px;fill:#15762a">#</text>
<text x="2170" y="488" class="b" textLength="367">Chat GPT Conversation (Script)</text>
<use href="#help" x="2748" y="480"/><use href="#sl" x="2788" y="480"/><use href="#dots" x="2828" y="480"/>
<text x="2088" y="537" class="b" textLength="136">Parameters</text>
<text x="2088" y="577" textLength="84" class="s">Api Key</text>
<rect x="2373" y="551" width="473" height="34" rx="4" class="fd"/>
<text x="2088" y="617" textLength="69" class="s">Model</text>
<rect x="2374" y="592" width="471" height="33" rx="4" class="dd"/><text x="2381" y="616" textLength="107">Chat GPT</text><path d="M2819 604H2833L2826 613Z" class="f"/>

<!-- Prompt -->
<rect x="2054" y="638" width="791" height="312" rx="10" fill="none" stroke="#f84b4b" stroke-width="8"/>
<text x="2088" y="671" class="b" textLength="84">Prompt</text>
<text x="2088" y="711" textLength="146" class="s">Initial Prompt</text>
<rect x="2089" y="722" width="731" height="183" rx="5" class="fd"/>
<g clip-path="url(#cTA)">
<text x="2093" y="747" textLength="714">Imagine you are Olaf, the lovable snowman from Frozen. You are</text>
<text x="2093" y="776" textLength="669">known for your cheerful and optimistic personality. Describe</text>
<text x="2093" y="805" textLength="703">your playful and innocent nature, your love for warm hugs, your</text>
<text x="2093" y="834" textLength="712">childlike curiosity about the world, and your tendency to find joy</text>
<text x="2093" y="863" textLength="718">in even the simplest things. Additionally, depict your unique style</text>
<text x="2093" y="892" textLength="721">of speaking, using a mix of childlike wonder, puns, and endearing</text>
<text x="2093" y="921" textLength="640">expressions. Remember to always stay in character as Olaf.</text>
</g>
<path d="M2827 742H2841L2834 733Z" class="f"/><path d="M2827 884H2841L2834 892Z" class="f"/>
<rect x="2825" y="754" width="17" height="68" rx="8" fill="#5f5f5f"/>

<!-- Event -->
<rect x="2088" y="956" width="756" height="150" rx="4" fill="#4e4e4e" stroke="#262626" stroke-width="2"/>
<path d="M2088 993V960Q2088 956 2092 956H2840Q2844 956 2844 960V993Z" fill="#393939"/>
<rect x="2088" y="992" width="756" height="2" fill="#262626"/>
<rect x="2089" y="994" width="754" height="8" fill="#424242"/><rect x="2089" y="1100" width="754" height="5" fill="#424242"/>
<text x="2102" y="983" textLength="313" class="s">Chat GPT Response (String)</text>
<path d="M2098 1018.500H2118M2098 1025.500H2118" stroke="#737373" stroke-width="2"/>
<rect x="2130" y="1009" width="209" height="34" rx="4" fill="#4f4f4f" stroke="#2c2c2c" stroke-width="2"/><text x="2137" y="1033" textLength="147">Runtime Only</text><path d="M2313 1022H2327L2320 1031Z" class="f"/>
<rect x="2351" y="1009" width="481" height="34" rx="4" fill="#4f4f4f" stroke="#2c2c2c" stroke-width="2"/><text x="2358" y="1033" textLength="430">GameManager.ReceiveChatGPTReply</text><path d="M2805 1022H2820L2812.500 1031Z" class="f"/>
<rect x="2130" y="1049" width="209" height="34" rx="4" fill="#2a2a2a" stroke="#1e1e1e" stroke-width="2"/>
<path d="M2301 1050H2335Q2338 1050 2338 1053V1079Q2338 1082 2335 1082H2301Z" fill="#3c3c3c"/>
<circle cx="2146" cy="1067" r="7" fill="none" stroke="#b4bccd" stroke-width="5"/><circle cx="2146" cy="1067" r="10" fill="none" stroke="#9aa3b8" stroke-width="2.500" stroke-dasharray="3 2.500"/>
<g clip-path="url(#cG)"><text x="2160" y="1076" textLength="172">GameManager</text></g>
<circle cx="2319" cy="1066" r="9" fill="none" stroke="#c4c4c4" stroke-width="2"/><circle cx="2319" cy="1066" r="3.500" class="f"/>
<path d="M2711 1107V1140Q2711 1145 2716 1145H2820Q2825 1145 2825 1140V1107Z" fill="#3d3d3d" stroke="#262626" stroke-width="2"/>
<path d="M2743 1115V1133M2734 1124H2752" stroke="#d0d0d0" stroke-width="4"/><path d="M2785 1124H2801" stroke="#d0d0d0" stroke-width="4"/>
<rect x="2050" y="1166" width="804" height="2" fill="#212121"/>
<rect x="2224" y="1186" width="456" height="45" rx="4" fill="#585858"/><path d="M2224 1230.500H2680" stroke="#2b2b2b" stroke-width="2"/>
<text x="2363" y="1216" textLength="179">Add Component</text>

<!-- status bar -->
<rect x="2" y="1822" width="2850" height="42" fill="#191919"/>
<path d="M2643 1826V1864M2695 1826V1864M2748 1826V1864M2801 1826V1864" stroke="#2f2f2f" stroke-width="2"/>
<ellipse cx="2669" cy="1850" rx="10" ry="11" class="f"/><circle cx="2669" cy="1837" r="5" class="f"/><path d="M2657 1840 2661 1844M2681 1840 2677 1844M2655 1850H2660M2683 1850H2678M2657 1860 2661 1856M2681 1860 2677 1856" stroke="#c4c4c4" stroke-width="2.400"/><path d="M2657 1834 2682 1860" stroke="#191919" stroke-width="4.500"/><path d="M2657 1834 2682 1860" stroke="#c4c4c4" stroke-width="2"/>
<ellipse cx="2723" cy="1838" rx="12" ry="5.500" class="f"/><path d="M2711 1840V1844Q2723 1851 2735 1844V1840Q2723 1847 2711 1840ZM2711 1847V1851Q2723 1858 2735 1851V1847Q2723 1854 2711 1847Z" class="f"/><path d="M2713 1833 2737 1860" stroke="#191919" stroke-width="4.500"/><path d="M2713 1833 2737 1860" stroke="#c4c4c4" stroke-width="2"/>
<circle cx="2775" cy="1846" r="12" class="i" stroke-dasharray="14 6"/><circle cx="2775" cy="1845" r="6" class="f"/><rect x="2772" y="1851" width="6" height="5" class="f"/><path d="M2763 1834 2789 1860" stroke="#191919" stroke-width="4.500"/><path d="M2763 1834 2789 1860" stroke="#c4c4c4" stroke-width="2"/>
<circle cx="2827" cy="1846" r="13.500" class="i"/><path d="M2821 1846 2825.500 1851 2834 1842" stroke="#c4c4c4" stroke-width="2.400" fill="none"/>
</svg>
</body></html>
